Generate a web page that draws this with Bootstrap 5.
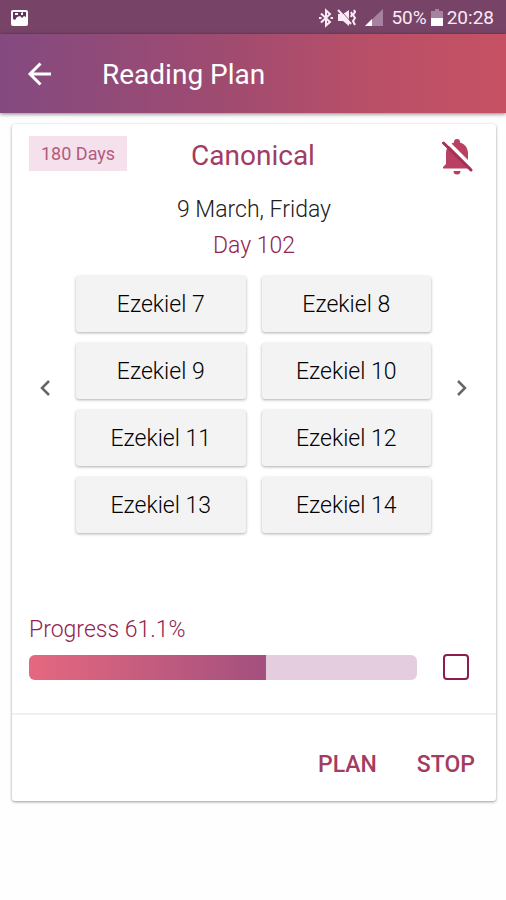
<!DOCTYPE html>
<html lang="en">
<head>
<meta charset="utf-8">
<meta name="viewport" content="width=device-width, initial-scale=1">
<title>Reading Plan</title>
<link href="https://cdn.jsdelivr.net/npm/bootstrap@5.3.0/dist/css/bootstrap.min.css" rel="stylesheet">
<style>
  body { font-family: Roboto, "Liberation Sans", sans-serif; background: #fefefe; color: #202020; }
  button, input { font-family: inherit; }
  svg { display: block; flex: none; }
  .status-bar { height: 34px; background: #774467; color: #fbeaf6; font-size: 19px; line-height: 34px; padding: 2px 12px 0 10px; }
  .app-bar { height: 79px; background: linear-gradient(90deg, #844a80 0%, #a04b70 45%, #b84f68 72%, #c65163 100%); box-shadow: 0 1px 4px rgba(0,0,0,.5); padding: 2px 25px 0; gap: 47px; color: #fff; }
  .app-bar h1 { font-size: 28px; line-height: 32px; }
  .icon-btn { background: none; border: 0; padding: 0; color: inherit; }
  .plan-card { margin: 11px 10px 0 12px; border: 0; border-radius: 3px; background: #fff; box-shadow: 0 1px 3px rgba(0,0,0,.4); color: inherit; }
  .accent { color: #a33c62; }
  .card-top { display: grid; grid-template-columns: 1fr auto 1fr; padding: 12px 19px 0 17px; }
  .days-tag { background: #f5e1ec; color: #b45a80; font-size: 18px; line-height: 35px; padding: 0 12px; }
  .plan-name { font-size: 28px; line-height: 40px; }
  .day-text { font-size: 23px; font-weight: 300; line-height: 36px; }
  .day-text.accent, .progress-label { color: #932350; }
  .day-block { padding-top: 16px; }
  .chapter-row { padding: 12px 28px 0 27px; }
  .arrow { margin-bottom: 34px; }
  .chapter-grid { display: grid; grid-template-columns: 1fr 1fr; gap: 11px 16px; margin: 0 24px; }
  .chapter { border: 0; border-radius: 3px; background: #f3f3f3; color: #000; font-size: 23px; font-weight: 300; line-height: 28px; padding: 15px 0 13px; box-shadow: 0 1px 3px rgba(0,0,0,.32); }
  .arrow { color: #666; }
  .progress-area { padding: 81px 27px 33px 17px; }
  .progress-label { font-size: 23px; font-weight: 300; line-height: 32px; margin-bottom: 8px; }
  .plan-progress { height: 25px; border-radius: 6px; background: #e5cde0; }
  .plan-progress .progress-bar { background: linear-gradient(90deg, #e5687f, #a3507e); }
  .done-check { width: 26px; height: 26px; margin: 0 0 0 26px; border: 2px solid #8f1c50; border-radius: 3px; background: #fff; }
  .plan-actions { background: none; border-top: 2px solid #f0f0f0; padding: 34px 21px 20px; gap: 40px; }
  .plan-actions button { font-size: 23px; line-height: 32px; font-weight: 500; }
</style>
<script src="https://cdn.jsdelivr.net/npm/bootstrap@5.3.0/dist/js/bootstrap.bundle.min.js"></script>
</head>
<body class="min-vh-100">
<div class="status-bar d-flex align-items-center">
  <svg width="19" height="18" viewBox="0 0 19 18" aria-hidden="true"><rect x="1" y="1" width="17" height="16" rx="2" fill="#fff"/><path d="M3 3h13v5l-2-1-2 2-2-2-3 1-2 3-2-1z" fill="#65305a"/><path d="M5 4h3v2H5zM11 4l2-1v3h-2z" fill="#fff"/></svg>
  <div class="d-flex align-items-center ms-auto">
    <svg width="14" height="20" viewBox="0 0 14 20" aria-hidden="true" fill="none" stroke="#fbeaf6" stroke-width="2"><path d="M2 5.500 11 14 7 17.500V2.500L11 6 2 14.500"/><path d="M0 10h2.500M11.500 10H14"/></svg>
    <svg class="ms-1" width="20" height="20" viewBox="0 0 20 20" aria-hidden="true"><path d="M1 6h5l6-4v16l-6-5H1z" fill="#fbeaf6"/><path d="M3 2 15 15" stroke="#774467" stroke-width="1"/><path d="M1 2 14 16" stroke="#fbeaf6" stroke-width="2"/><path d="m14 4 1 2-1 3M17 2l1 2-2 3 2 3-2 3 2 4" fill="none" stroke="#fbeaf6" stroke-width="2"/></svg>
    <svg class="ms-2" width="18" height="18" viewBox="0 0 18 18" aria-hidden="true"><path d="M0 17 18 0v17z" fill="#a681a0"/><path d="M0 17 7 10v7z" fill="#fff"/></svg>
    <span class="ms-2">50%</span>
    <svg class="ms-1" width="12" height="18" viewBox="0 0 12 18" aria-hidden="true"><path d="M4 0h4v2h4v7H0V2h4z" fill="#a681a0"/><path d="M0 9h12v8H0z" fill="#fff"/></svg>
    <span class="ms-1">20:28</span>
  </div>
</div>
<header class="app-bar d-flex align-items-center">
  <button class="icon-btn" type="button" aria-label="Back"><svg width="30" height="30" viewBox="0 0 30 30" fill="none" stroke="#fff" stroke-width="3"><path d="M26 14H5M15.500 3.500 5 14l10.500 10.500"/></svg></button>
  <h1 class="m-0 fw-normal">Reading Plan</h1>
</header>
<main>
  <section class="card plan-card">
    <div class="card-top align-items-start">
      <span class="days-tag me-auto">180 Days</span>
      <h2 class="plan-name accent m-0 fw-normal">Canonical</h2>
      <button class="icon-btn ms-auto me-1" type="button" aria-label="Reminders off"><svg width="32" height="40" viewBox="0 0 32 40"><path d="M13 6.500V6a3 3 0 0 1 6 0v.5c5 1.500 8 5.500 8 11V28l3 3v1.500H2V31l3-3V17.500c0-5.500 3-9.500 8-11zM12.500 35h7a3.500 3.500 0 0 1-7 0z" fill="#b94061"/><path d="M0 2H5L32 29V34z" fill="#fff"/><path d="M2.500 7 30 34" stroke="#a5305a" stroke-width="3" stroke-linecap="round"/></svg></button>
    </div>
    <div class="day-block text-center">
      <p class="day-text m-0">9 March, Friday</p>
      <p class="day-text accent m-0">Day 102</p>
    </div>
    <div class="chapter-row d-flex align-items-center">
      <button class="icon-btn arrow" type="button" aria-label="Previous day"><svg width="13" height="20" viewBox="0 0 13 20" fill="none" stroke="currentColor" stroke-width="2.500"><path d="M10 3 3 10l7 7"/></svg></button>
      <div class="chapter-grid flex-grow-1">
        <button class="chapter" type="button">Ezekiel 7</button>
        <button class="chapter" type="button">Ezekiel 8</button>
        <button class="chapter" type="button">Ezekiel 9</button>
        <button class="chapter" type="button">Ezekiel 10</button>
        <button class="chapter" type="button">Ezekiel 11</button>
        <button class="chapter" type="button">Ezekiel 12</button>
        <button class="chapter" type="button">Ezekiel 13</button>
        <button class="chapter" type="button">Ezekiel 14</button>
      </div>
      <button class="icon-btn arrow" type="button" aria-label="Next day"><svg width="13" height="20" viewBox="0 0 13 20" fill="none" stroke="currentColor" stroke-width="2.500"><path d="m3 3 7 7-7 7"/></svg></button>
    </div>
    <div class="progress-area">
      <label class="progress-label d-block" for="dayDone">Progress 61.1%</label>
      <div class="d-flex align-items-center">
        <div class="progress plan-progress flex-grow-1" role="progressbar" aria-label="Plan progress" aria-valuenow="61.1" aria-valuemin="0" aria-valuemax="100"><div class="progress-bar" style="width: 61.1%"></div></div>
        <input class="form-check-input done-check" type="checkbox" id="dayDone">
      </div>
    </div>
    <div class="card-footer plan-actions d-flex justify-content-end">
      <button class="icon-btn accent" type="button">PLAN</button>
      <button class="icon-btn accent" type="button">STOP</button>
    </div>
  </section>
</main>
</body>
</html>
